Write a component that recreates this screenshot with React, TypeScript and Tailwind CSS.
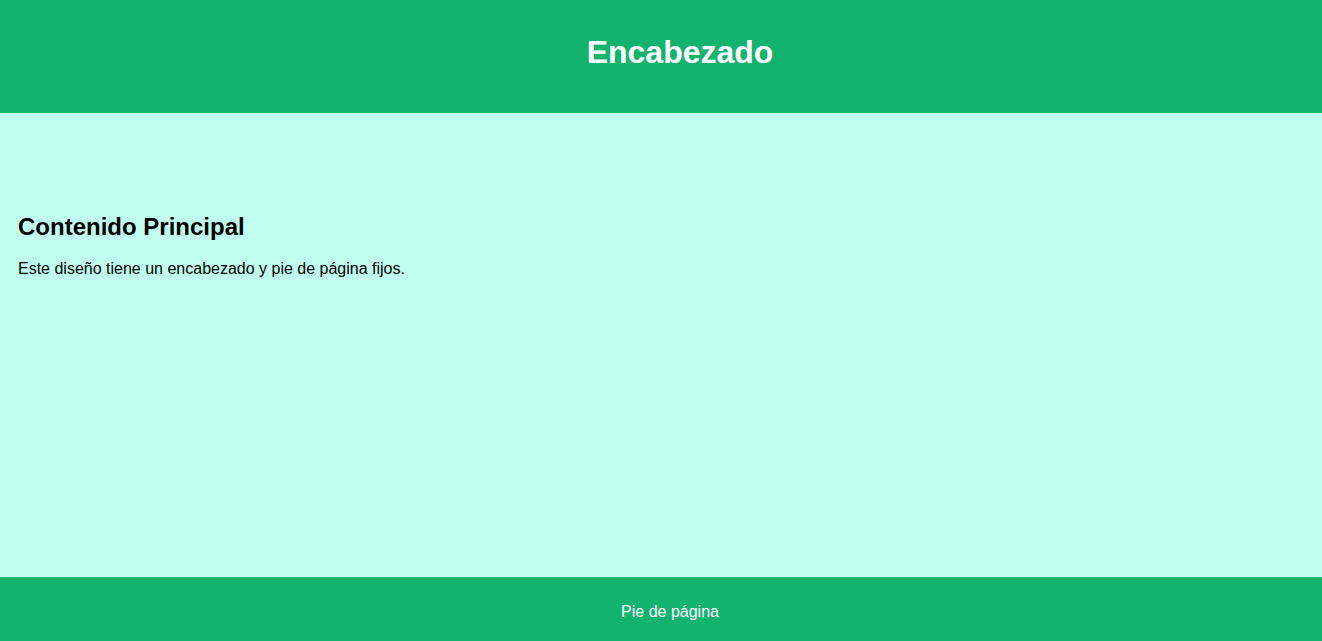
export default function App() {
  return (
    <div
      className="flex h-[641px] flex-col bg-[#c0fff0] text-black"
      style={{ fontFamily: '"Liberation Sans", Arial, sans-serif' }}
    >
      <header className="h-[113px] shrink-0 bg-[#12b36f] pl-[38px] pt-[34px] text-center">
        <h1 className="text-[32px] font-bold leading-9 text-white">Encabezado</h1>
      </header>

      <main className="flex-1 px-[18px] pt-[98px]">
        <h2 className="mb-[14px] text-2xl leading-8 font-bold">Contenido Principal</h2>
        <p className="text-base leading-6">
          Este diseño tiene un encabezado y pie de página fijos.
        </p>
      </main>

      <footer className="flex h-16 shrink-0 items-center justify-center bg-[#12b36f] pl-[18px] pt-[6px]">
        <p className="text-base leading-6 text-white">Pie de página</p>
      </footer>
    </div>
  );
}
